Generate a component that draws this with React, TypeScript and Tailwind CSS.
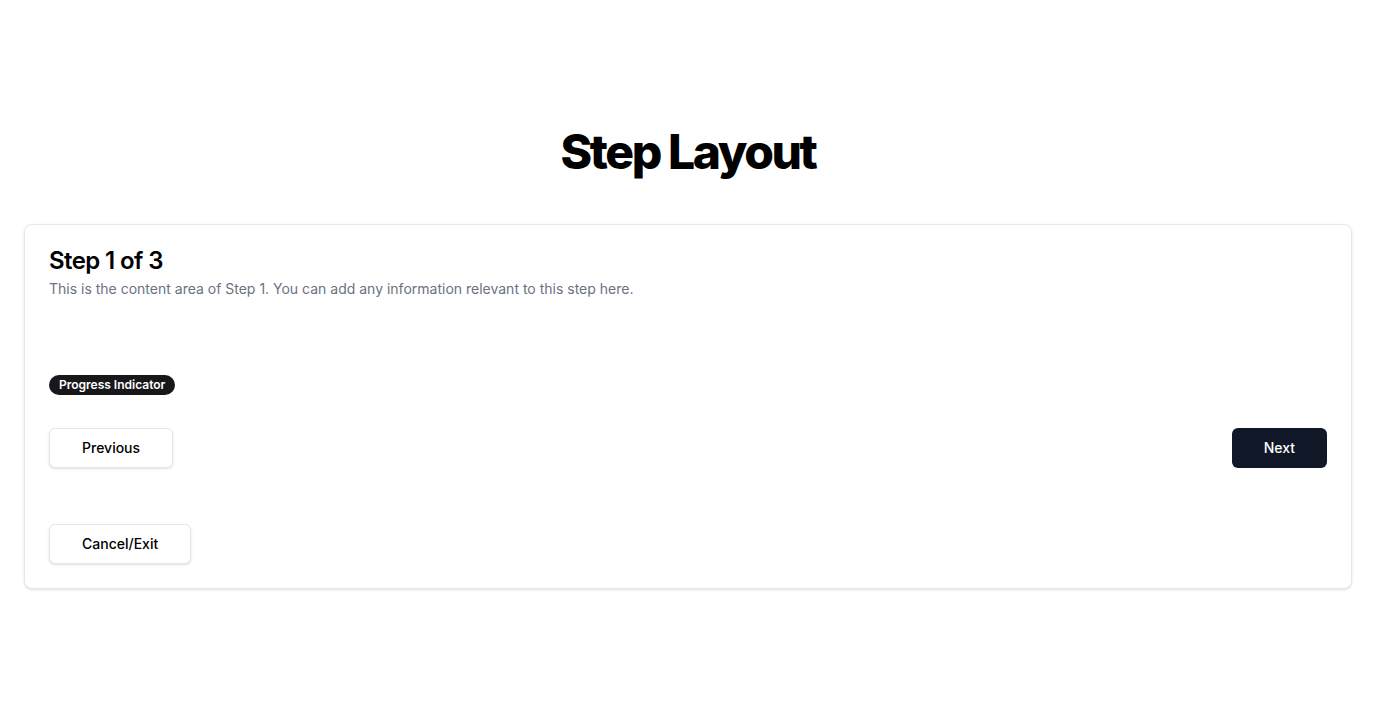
export default function App() {
  return (
    <div className="min-h-screen bg-white px-6 pt-[128px] font-['Inter',sans-serif] text-black">
      <h1 className="text-center text-5xl font-extrabold leading-none tracking-tighter">Step Layout</h1>

      <div className="mt-[48px] rounded-lg border border-gray-200 bg-white shadow-sm">
        <div className="flex flex-col gap-1.5 p-6">
          <h2 className="text-2xl font-semibold leading-none tracking-tight">Step 1 of 3</h2>
          <p className="text-sm text-gray-500">
            This is the content area of Step 1. You can add any information relevant to this step here.
          </p>
        </div>

        <div className="px-6 pb-6">
          <div className="mt-12">
            <span className="inline-flex items-center rounded-full bg-[#18181b] px-2.5 py-0.5 text-xs font-semibold text-white">
              Progress Indicator
            </span>
          </div>

          <div className="mt-[33px] flex items-center justify-between">
            <button className="h-10 rounded-md border border-gray-200 bg-white px-8 text-sm font-medium shadow-sm">
              Previous
            </button>
            <button className="h-10 rounded-md bg-gray-900 px-8 text-sm font-medium text-white">
              Next
            </button>
          </div>

          <div className="mt-14">
            <button className="h-10 rounded-md border border-gray-200 bg-white px-8 text-sm font-medium shadow-sm">
              Cancel/Exit
            </button>
          </div>
        </div>
      </div>
    </div>
  );
}
